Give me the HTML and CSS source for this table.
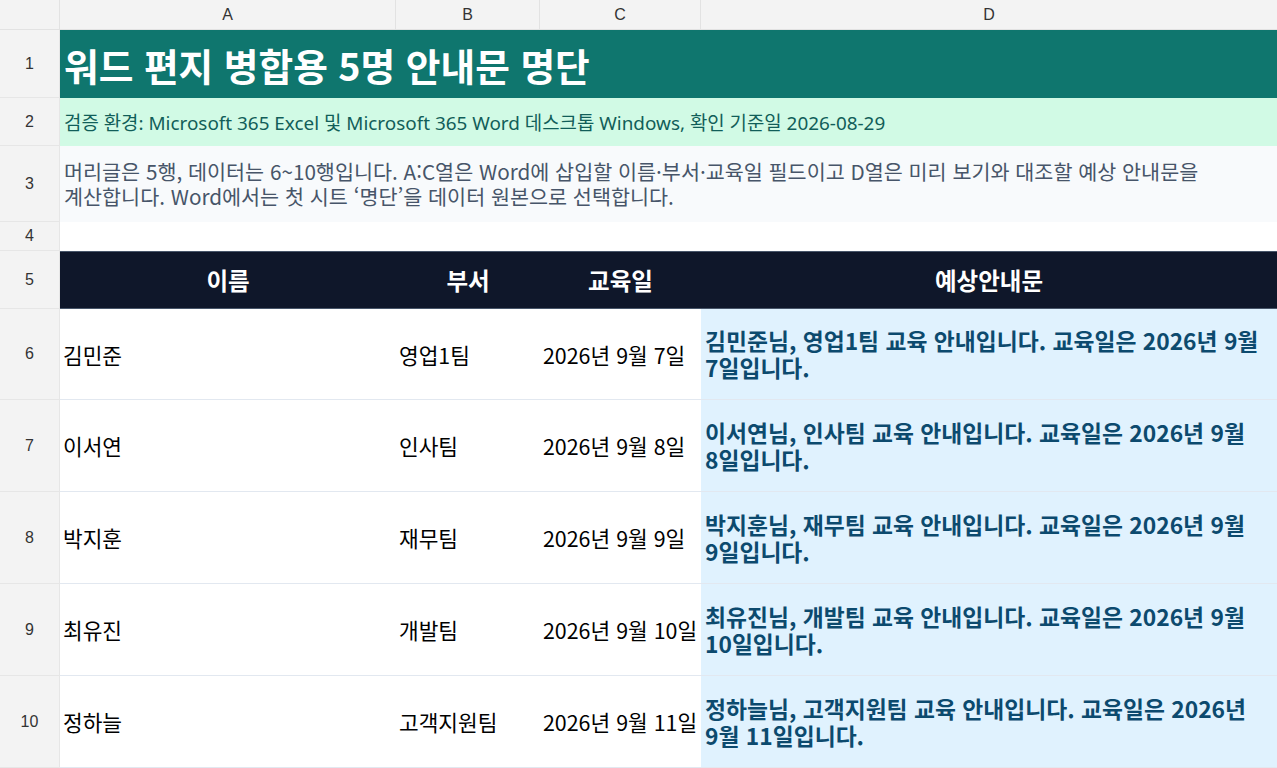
FILE: index.html
```html
<!DOCTYPE html>
<html lang="ko">
<head>
<meta charset="utf-8">
<title>명단</title>
<link rel="stylesheet" href="styles.css">
</head>
<body>
<div class="sheet">
  <div class="corner"></div>
  <div class="colh">A</div>
  <div class="colh">B</div>
  <div class="colh">C</div>
  <div class="colh last">D</div>

  <div class="rowh">1</div>
  <div class="cell title span">워드 편지 병합용 5명 안내문 명단</div>

  <div class="rowh">2</div>
  <div class="cell env span">검증 환경: Microsoft 365 Excel 및 Microsoft 365 Word 데스크톱 Windows, 확인 기준일 2026-08-29</div>

  <div class="rowh">3</div>
  <div class="cell note span">머리글은 5행, 데이터는 6~10행입니다. A:C열은 Word에 삽입할 이름·부서·교육일 필드이고 D열은 미리 보기와 대조할 예상 안내문을 계산합니다. Word에서는 첫 시트 ‘명단’을 데이터 원본으로 선택합니다.</div>

  <div class="rowh">4</div>
  <div class="cell blank span"></div>

  <div class="rowh">5</div>
  <div class="cell head">이름</div>
  <div class="cell head">부서</div>
  <div class="cell head">교육일</div>
  <div class="cell head">예상안내문</div>

  <div class="rowh">6</div>
  <div class="cell data">김민준</div>
  <div class="cell data">영업1팀</div>
  <div class="cell data">2026년 9월 7일</div>
  <div class="cell msg">김민준님, 영업1팀 교육 안내입니다. 교육일은 2026년 9월 7일입니다.</div>

  <div class="rowh">7</div>
  <div class="cell data">이서연</div>
  <div class="cell data">인사팀</div>
  <div class="cell data">2026년 9월 8일</div>
  <div class="cell msg">이서연님, 인사팀 교육 안내입니다. 교육일은 2026년 9월 8일입니다.</div>

  <div class="rowh">8</div>
  <div class="cell data">박지훈</div>
  <div class="cell data">재무팀</div>
  <div class="cell data">2026년 9월 9일</div>
  <div class="cell msg">박지훈님, 재무팀 교육 안내입니다. 교육일은 2026년 9월 9일입니다.</div>

  <div class="rowh">9</div>
  <div class="cell data">최유진</div>
  <div class="cell data">개발팀</div>
  <div class="cell data">2026년 9월 10일</div>
  <div class="cell msg">최유진님, 개발팀 교육 안내입니다. 교육일은 2026년 9월 10일입니다.</div>

  <div class="rowh">10</div>
  <div class="cell data">정하늘</div>
  <div class="cell data">고객지원팀</div>
  <div class="cell data">2026년 9월 11일</div>
  <div class="cell msg">정하늘님, 고객지원팀 교육 안내입니다. 교육일은 2026년 9월 11일입니다.</div>
</div>
</body>
</html>
```
FILE: styles.css
```css
html, body {
  margin: 0;
  padding: 0;
  background: #ffffff;
  overflow: hidden;
}

.sheet {
  display: grid;
  grid-template-columns: 60px 336px 144px 161px 576px;
  grid-template-rows: 30px 68px 48px 76px 29px 58px 91px 92px 92px 92px 92px;
  width: 1277px;
  height: 768px;
  overflow: hidden;
  font-family: "Noto Sans CJK KR", "Noto Sans", sans-serif;
  word-break: keep-all;
}

.corner,
.colh,
.rowh {
  background: #f3f3f3;
  color: #333333;
  font-family: "Liberation Sans", Arial, sans-serif;
  font-size: 16px;
  display: flex;
  align-items: center;
  justify-content: center;
  box-sizing: border-box;
}

.corner,
.colh {
  border-right: 1px solid #e2e2e2;
  border-bottom: 1px solid #e2e2e2;
}

.colh.last {
  border-right: none;
}

.rowh {
  border-right: 1px solid #e6e6e6;
  border-bottom: 1px solid #e6e6e6;
}

.cell {
  box-sizing: border-box;
  display: flex;
  align-items: center;
  padding: 0 4px;
  min-width: 0;
}

.span {
  grid-column: 2 / 6;
}

.title {
  background: #0f766e;
  color: #ffffff;
  font-size: 37.7px;
  font-weight: 700;
}

.env {
  background: #d1fae5;
  color: #115e59;
  font-family: "Noto Sans", "Noto Sans CJK KR", sans-serif;
  font-size: 18.9px;
}

.note {
  background: #f8fafc;
  color: #475569;
  font-size: 20.7px;
  line-height: 25px;
}

.blank {
  background: #ffffff;
}

.head {
  background: #0f172a;
  color: #ffffff;
  font-size: 23.5px;
  font-weight: 700;
  justify-content: center;
  border-top: 1px solid #475569;
  border-bottom: 1px solid #475569;
}

.data {
  background: #ffffff;
  color: #000000;
  font-size: 21.4px;
  white-space: nowrap;
  padding-left: 3px;
  border-bottom: 1px solid #e2e8f0;
}

.msg {
  background: #e0f2fe;
  color: #0c4a6e;
  font-size: 22.8px;
  font-weight: 700;
  line-height: 27px;
  border-bottom: 1px solid #e2e8f0;
}
```
